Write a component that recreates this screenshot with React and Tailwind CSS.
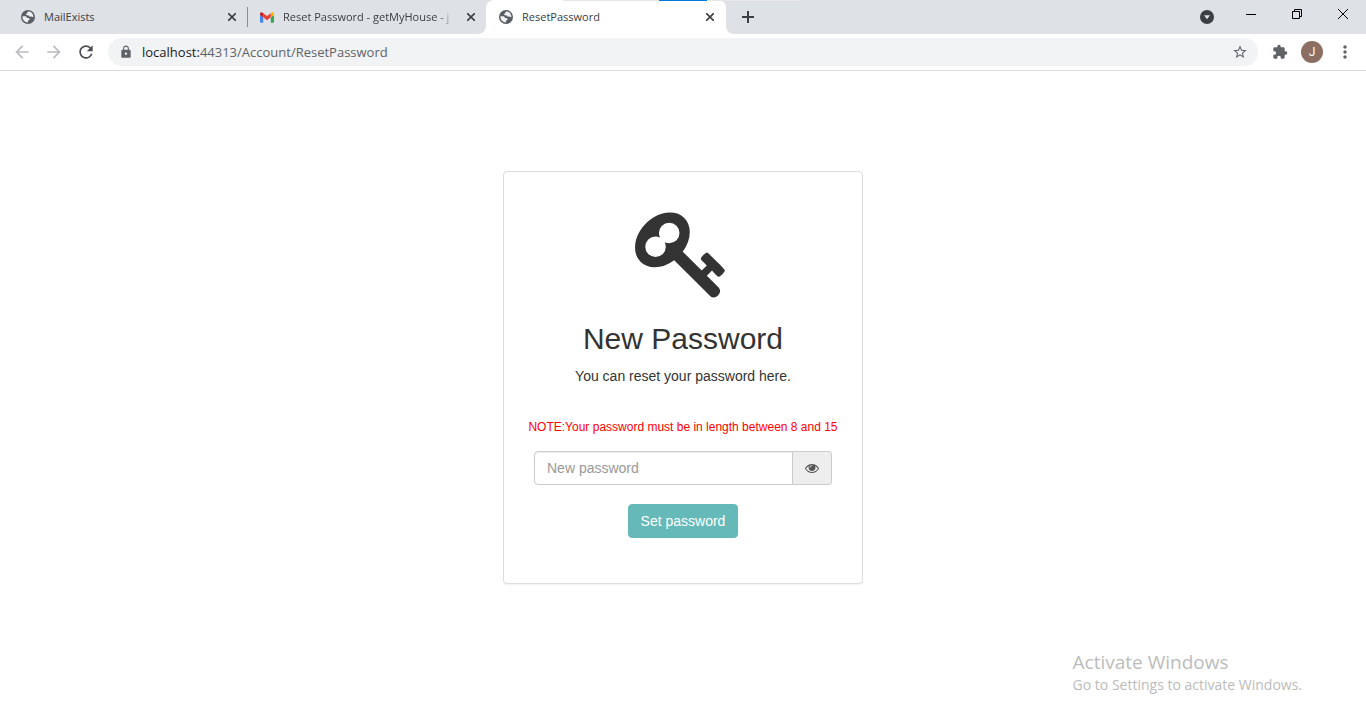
import React, { useState } from "react";
import { MdLock, MdStarBorder, MdExtension, MdMoreVert, MdArrowBack, MdArrowForward, MdRefresh } from "react-icons/md";

function GlobeIcon() {
  return (
    <svg viewBox="0 0 14 14" className="size-[14px] shrink-0" aria-hidden="true">
      <circle cx="7" cy="7" r="7" fill="#5a5f64" />
      <path
        fill="#eef0f2"
        d="M7.6 1.6c-.9.1-1.4.7-1.3 1.3 0 .5-.5.6-1 .8-.5.3-.2.9.1 1.2.4.4 1.1.3 1.7.4.7.1.8.8 1.3 1.2.5.3 1.2 0 1.8.1.8.1 1.2.7 2.2.6.1-1.900-.9-4-2.300-4.900C9.300 1.800 8.400 1.500 7.600 1.600zM1.500 6.200c-.2 1.900.5 3.900 2 5.100 1 .8 2.300 1.200 3.500 1.100.1-.6-.2-1.200.1-1.600.4-.5 1.200-.5 1.400-1.200.2-.8-.4-1.400-1.100-1.500-.7-.2-1 .1-1.500-.4-.5-.6-.4-1.200-1.200-1.400-1-.2-2.100.1-3.200-.1z"
      />
    </svg>
  );
}

function GmailIcon() {
  return (
    <svg viewBox="52 42 88 66" className="h-[11px] w-[14px] shrink-0" aria-hidden="true">
      <path fill="#4285f4" d="M58 108h14V74L52 59v43c0 3.320 2.690 6 6 6" />
      <path fill="#34a853" d="M120 108h14c3.320 0 6-2.690 6-6V59l-20 15" />
      <path fill="#fbbc04" d="M120 48v26l20-15v-8c0-7.420-8.470-11.650-14.400-7.200" />
      <path fill="#ea4335" d="M72 74V48l24 18 24-18v26L96 92" />
      <path fill="#c5221f" d="M52 51v8l20 15V48l-5.600-4.200c-5.940-4.450-14.400-.22-14.400 7.200" />
    </svg>
  );
}

function KeyIcon() {
  return (
    <svg viewBox="0 128 1683 1592" className="w-[90px]" fill="#333333" aria-hidden="true">
      <path d="M832 512q0-80-56-136t-136-56-136 56-56 136q0 42 19 83-41-19-83-19-80 0-136 56t-56 136 56 136 136 56 136-56 56-136q0-42-19-83 41 19 83 19 80 0 136-56t56-136zm851 704q0 17-49 66t-66 49q-9 0-28.500-16t-36.500-33-38.500-40-24.500-26l-96 96 220 220q28 28 28 68 0 42-39 81t-81 39q-40 0-68-28l-671-671q-176 131-365 131-163 0-265.500-102.500t-102.500-265.500q0-160 95-313t248-248 313-95q163 0 265.500 102.500t102.500 265.500q0 189-131 365l355 355 96-96q-3-3-26-24.500t-40-38.500-33-36.500-16-28.500q0-17 49-66t66-49q13 0 23 10 6 6 46 44.500t82 79.500 86.500 86 73 78 28.500 41z" />
    </svg>
  );
}

function EyeIcon() {
  return (
    <svg viewBox="0 0 1792 1792" className="size-[14px]" fill="#555555" aria-hidden="true">
      <path d="M1664 960q-152-236-381-353 61 104 61 225 0 185-131.500 316.500t-316.500 131.500-316.500-131.500-131.500-316.500q0-121 61-225-229 117-381 353 133 205 333.500 326.500t434.500 121.500 434.500-121.500 333.500-326.500zm-720-384q0-20-14-34t-34-14q-125 0-214.500 89.500t-89.500 214.500q0 20 14 34t34 14 34-14 14-34q0-86 61-147t147-61q20 0 34-14t14-34zm848 384q0 34-20 69-140 230-376.500 368.500t-499.500 138.500-499.500-139-376.500-368q-20-35-20-69t20-69q140-229 376.500-368t499.500-139 499.500 139 376.500 368q20 35 20 69z" />
    </svg>
  );
}

function CloseTab({ label }) {
  return (
    <button aria-label={label} className="flex size-4 shrink-0 items-center justify-center">
      <svg viewBox="0 0 8 8" className="size-2" stroke="#3c4043" strokeWidth="1.6" aria-hidden="true">
        <path d="M0 0l8 8M8 0l-8 8" />
      </svg>
    </button>
  );
}

function TabStrip() {
  return (
    <header className="relative flex h-[34px] bg-white text-[11px] text-[#3c4043]">
      <div className="flex w-[486px] shrink-0 items-center rounded-br-lg bg-[#dee1e6]">
        <div className="flex h-5 flex-1 items-center gap-[9px] border-r border-[#8a8d91] pr-[7px] pl-[21px]">
          <GlobeIcon />
          <span className="flex-1">MailExists</span>
          <CloseTab label="Close MailExists" />
        </div>
        <div className="flex w-[238px] items-center gap-[9px] pr-[7px] pl-3">
          <GmailIcon />
          <span className="flex-1 mask-r-from-90% whitespace-nowrap">
            Reset Password - getMyHouse - j
          </span>
          <CloseTab label="Close Reset Password" />
        </div>
      </div>
      <div className="flex w-[240px] shrink-0 bg-[#dee1e6]">
        <div className="flex flex-1 items-center gap-[9px] rounded-t-lg bg-white pr-2 pl-[13px]">
          <GlobeIcon />
          <span className="flex-1">ResetPassword</span>
          <CloseTab label="Close ResetPassword" />
        </div>
      </div>
      <div className="flex flex-1 items-center rounded-bl-lg bg-[#dee1e6] pl-[14px]">
        <button aria-label="New tab" className="flex size-4 items-center justify-center">
          <svg viewBox="0 0 12 12" className="size-3" stroke="#3c4043" strokeWidth="2" aria-hidden="true">
            <path d="M6 0v12M0 6h12" />
          </svg>
        </button>
        <div className="ml-auto flex h-full">
          <button aria-label="Search tabs" className="mr-[14px] flex items-center">
            <svg viewBox="0 0 14 14" className="size-[14px]" aria-hidden="true">
              <circle cx="7" cy="7" r="7" fill="#3c4043" />
              <path d="M4 5.300h6L7 9.300z" fill="#dee1e6" />
            </svg>
          </button>
          <button aria-label="Minimize" className="flex w-[46px] justify-center pt-2">
            <svg viewBox="0 0 12 12" className="size-3" stroke="#000" fill="none" aria-hidden="true">
              <path d="M1 6.500h10" />
            </svg>
          </button>
          <button aria-label="Restore" className="flex w-[46px] justify-center pt-2">
            <svg viewBox="0 0 12 12" className="size-3" stroke="#000" fill="none" aria-hidden="true">
              <path d="M1.500 3.500h7v7h-7zM3.500 3.500v-2h7v7h-2" />
            </svg>
          </button>
          <button aria-label="Close window" className="flex w-[46px] justify-center pt-2">
            <svg viewBox="0 0 12 12" className="size-3" stroke="#000" fill="none" aria-hidden="true">
              <path d="M1 1l10 10M11 1l-10 10" />
            </svg>
          </button>
        </div>
      </div>
      <div className="absolute top-0 left-[563px] flex h-px w-[240px] justify-center bg-[#e6e6e6]">
        <span className="w-12 bg-[#0078d7]" />
      </div>
    </header>
  );
}

function Toolbar() {
  return (
    <nav className="flex h-[37px] items-center border-b border-[#d9dadc] bg-white pr-[11px] pl-3">
      <div className="flex gap-3">
        <button aria-label="Back"><MdArrowBack className="size-5 text-[#babcbe]" /></button>
        <button aria-label="Forward"><MdArrowForward className="size-5 text-[#babcbe]" /></button>
        <button aria-label="Reload"><MdRefresh className="size-5 text-[#4a4d51]" /></button>
      </div>
      <div className="ml-3 flex h-7 flex-1 items-center rounded-full bg-[#f1f3f4] pr-[10px] pl-[11px]">
        <MdLock className="size-[14px] text-[#5f6368]" />
        <a href="#" className="ml-[9px] flex-1 text-[13px] leading-5 text-[#5f6368]">
          <span className="text-[#202124]">localhost:</span>44313/Account/ResetPassword
        </a>
        <button aria-label="Bookmark this page"><MdStarBorder className="size-4 text-[#5f6368]" /></button>
      </div>
      <button aria-label="Extensions" className="ml-[14px]"><MdExtension className="size-4 text-[#5f6368]" /></button>
      <button aria-label="Profile" className="ml-[13px] flex size-[22px] items-center justify-center rounded-full bg-[#8d6e63] font-[Roboto,sans-serif] text-[12px] text-white">
        J
      </button>
      <button aria-label="Menu" className="ml-3"><MdMoreVert className="size-5 text-[#5f6368]" /></button>
    </nav>
  );
}

function PasswordCard() {
  const [visible, setVisible] = useState(false);
  return (
    <section className="w-[360px] rounded-[4px] border border-[#dddddd] bg-white px-[14px] pt-10 pb-[45px] text-center font-['Liberation_Sans',Arial,sans-serif] text-[14px] leading-5 text-[#333333] shadow-[0_1px_1px_rgba(0,0,0,0.05)]">
      <div className="flex h-[86px] justify-center pr-[6px]">
        <KeyIcon />
      </div>
      <h2 className="mt-6 text-[30px] leading-[33px]">New Password</h2>
      <p className="mt-[11px]">You can reset your password here.</p>
      <form className="mt-[31px]" onSubmit={(e) => e.preventDefault()}>
        <label htmlFor="new-password" className="block text-[12px] whitespace-nowrap text-[#ff0000]">
          NOTE:Your password must be in length between 8 and 15
        </label>
        <div className="mx-4 mt-[14px] flex h-[34px]">
          <input
            id="new-password"
            type={visible ? "text" : "password"}
            placeholder="New password"
            className="w-0 flex-1 rounded-l-[4px] border border-[#cccccc] px-3 shadow-[inset_0_1px_1px_rgba(0,0,0,0.075)] placeholder:text-[#999999]"
          />
          <button
            type="button"
            aria-label="Show password"
            onClick={() => setVisible(!visible)}
            className="flex w-[39px] items-center justify-center rounded-r-[4px] border border-l-0 border-[#cccccc] bg-[#eeeeee]"
          >
            <EyeIcon />
          </button>
        </div>
        <button type="submit" className="mt-[19px] h-[34px] rounded-[4px] border border-[#66b9b9] bg-[#66b9b9] px-3 text-white">
          Set password
        </button>
      </form>
    </section>
  );
}

export default function App() {
  return (
    <div className="flex min-h-screen flex-col bg-white font-['Open_Sans','Noto_Sans',sans-serif]">
      <TabStrip />
      <Toolbar />
      <main className="flex justify-center pt-[100px]">
        <PasswordCard />
      </main>
      <aside className="mt-auto mr-16 mb-[33px] self-end text-[#bcbcbc]">
        <p className="mb-px text-[19px] leading-6">Activate Windows</p>
        <p className="text-[14px] leading-5">Go to Settings to activate Windows.</p>
      </aside>
    </div>
  );
}
